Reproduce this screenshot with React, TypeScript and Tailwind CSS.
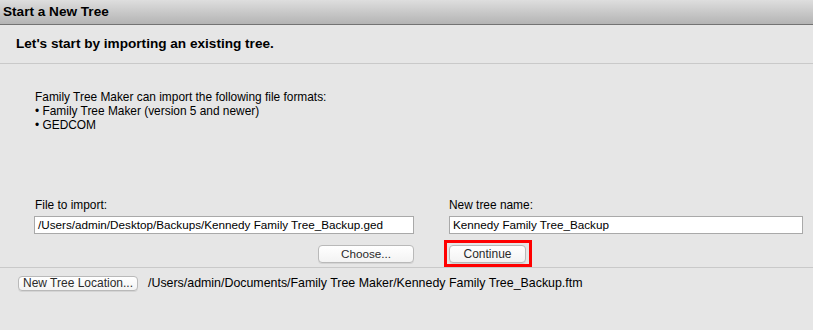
import React from "react";

const font = { fontFamily: '"Liberation Sans", Arial, sans-serif' };

function MacButton({ label, className = "" }: { label: string; className?: string }) {
  return (
    <button
      type="button"
      className={`flex items-center justify-center rounded-[4px] border border-[#b9b9b9] bg-gradient-to-b from-white to-[#f3f3f3] leading-none text-[#2a2a2a] shadow-[0_1px_0_rgba(0,0,0,0.08)] ${className}`}
    >
      {label}
    </button>
  );
}

export default function App() {
  return (
    <div className="w-[813px] h-[330px] bg-[#e6e6e6] flex flex-col text-black" style={font}>
      {/* title bar */}
      <div className="h-[25px] shrink-0 bg-gradient-to-b from-[#dedede] to-[#b4b4b4] border-b border-[#737373] flex items-center pl-[3px]">
        <span className="text-[13.6px] font-bold">Start a New Tree</span>
      </div>

      {/* heading band */}
      <div className="h-[39px] shrink-0 border-b border-[#c9c9c9] flex items-center pl-[16px]">
        <span className="text-[13.6px] font-bold">Let's start by importing an existing tree.</span>
      </div>

      {/* body */}
      <div className="pt-[26px] pl-[35px] text-[11.9px] leading-[14px]">
        <p>Family Tree Maker can import the following file formats:</p>
        <p>• Family Tree Maker (version 5 and newer)</p>
        <p>• GEDCOM</p>
      </div>

      <div className="mt-[66px] pl-[34px] grid grid-cols-[380px_354px] gap-x-[35px]">
        <div className="flex flex-col">
          <span className="text-[11.9px] leading-[14px] pl-[1px]">File to import:</span>
          <div className="mt-[4px] h-[18px] bg-white border border-[#a9a9a9] flex items-center px-[3px] text-[11.7px]">
            /Users/admin/Desktop/Backups/Kennedy Family Tree_Backup.ged
          </div>
          <div className="mt-[11px] flex justify-end">
            <MacButton label="Choose..." className="w-[96px] h-[18px] text-[11.7px]" />
          </div>
        </div>
        <div className="flex flex-col">
          <span className="text-[11.9px] leading-[14px]">New tree name:</span>
          <div className="mt-[4px] h-[18px] bg-white border border-[#a9a9a9] flex items-center px-[3px] text-[11.7px]">
            Kennedy Family Tree_Backup
          </div>
          <div className="mt-[11px] flex">
            <div className="relative flex">
              <MacButton label="Continue" className="w-[77px] h-[18px] text-[12px]" />
              <div className="absolute -left-[5px] -top-[5px] -right-[6px] -bottom-[4px] border-[3px] border-[#ff0000]" />
            </div>
          </div>
        </div>
      </div>

      <div className="mt-[4px] border-t border-[#c9c9c9] flex items-center pt-[6px] pl-[18px]">
        <MacButton label="New Tree Location..." className="w-[120px] h-[15px] text-[12px]" />
        <span className="ml-[10px] text-[12.4px]">/Users/admin/Documents/Family Tree Maker/Kennedy Family Tree_Backup.ftm</span>
      </div>
    </div>
  );
}
